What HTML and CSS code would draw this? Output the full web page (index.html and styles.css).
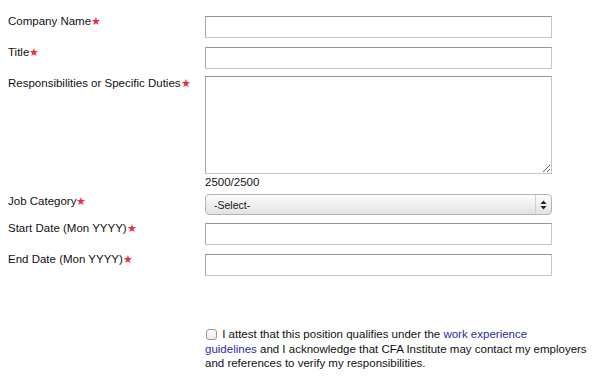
FILE: index.html
```html
<!DOCTYPE html>
<html>
<head>
  <title>Work Experience</title>
  <link rel="stylesheet" href="styles.css">
</head>
<body>
  <!-- Work experience form -->
  <form class="exp-form">
    <div class="row row-company">
      <label class="label">Company Name<span class="req">&#9733;</span></label>
      <input class="field" type="text">
    </div>
    <div class="row row-title">
      <label class="label">Title<span class="req">&#9733;</span></label>
      <input class="field" type="text">
    </div>
    <div class="row row-duties">
      <label class="label">Responsibilities or Specific Duties<span class="req">&#9733;</span></label>
      <div class="field-col">
        <textarea class="field area"></textarea>
        <div class="counter">2500/2500</div>
      </div>
    </div>
    <div class="row row-category">
      <label class="label">Job Category<span class="req">&#9733;</span></label>
      <div class="select-wrap">
        <select class="select">
          <option>-Select-</option>
        </select>
        <!-- up/down arrows drawn over the select -->
        <span class="select-arrows">
          <svg width="7" height="10" viewBox="0 0 7 10"><path d="M3.5 0.5 L6.5 4 H0.5 Z M3.5 9.5 L6.5 6 H0.5 Z" fill="#222"/></svg>
        </span>
      </div>
    </div>
    <div class="row row-start">
      <label class="label">Start Date (Mon YYYY)<span class="req">&#9733;</span></label>
      <input class="field" type="text">
    </div>
    <div class="row row-end">
      <label class="label">End Date (Mon YYYY)<span class="req">&#9733;</span></label>
      <input class="field" type="text">
    </div>
    <!-- Attestation -->
    <p class="attest">
      <input class="check" type="checkbox"> I attest that this position qualifies under the <a href="#">work experience<br>guidelines</a> and I acknowledge that CFA Institute may contact my employers<br>and references to verify my responsibilities.
    </p>
  </form>
</body>
</html>
```

FILE: styles.css
```css
body {
  margin: 0;
  font-family: 'Liberation Sans', Arial, sans-serif;
  font-size: 11.5px;
  color: #111;
  background: #fff;
}
.exp-form {
  padding: 0 8px;
}
.row {
  display: flex;
  align-items: flex-start;
}
.label {
  width: 197px;
  flex: none;
  line-height: 16px;
}
.req {
  color: #e8313f;
  font-size: 11px;
}
.field {
  box-sizing: border-box;
  width: 347px;
  height: 22px;
  margin: 3px 0 0;
  border: 1px solid #c6c6c6;
  border-top-color: #959595;
  border-left-color: #a8a8a8;
  padding: 2px 4px;
  font: inherit;
}
.row-company { margin-top: 13px; }
.row-title { margin-top: 6px; }
.row-duties { margin-top: 6px; }
.area {
  display: block;
  height: 98px;
  margin-top: 1px;
  resize: both;
}
.counter {
  line-height: 16px;
}
.row-category { margin-top: 3px; }
.select-wrap {
  position: relative;
  margin-top: 1px;
}
.select {
  appearance: none;
  -webkit-appearance: none;
  box-sizing: border-box;
  width: 347px;
  height: 21px;
  border: 1px solid #b4b4b4;
  border-radius: 4px;
  background: linear-gradient(#fdfdfd, #ececec 60%, #e2e2e2);
  box-shadow: inset 0 1px 0 #fff;
  padding: 0 8px;
  font: 10.5px 'Liberation Sans', Arial, sans-serif;
  color: #111;
}
.select-arrows {
  position: absolute;
  right: 1px;
  top: 1px;
  bottom: 1px;
  width: 15px;
  border-left: 1px solid #d0d0d0;
  display: flex;
  align-items: center;
  justify-content: center;
  pointer-events: none;
}
.row-start { margin-top: 5px; }
.row-end { margin-top: 6px; }
.attest {
  margin: 51px 0 0 197px;
  line-height: 14.5px;
  white-space: nowrap;
}
.check {
  appearance: none;
  -webkit-appearance: none;
  width: 11px;
  height: 11px;
  margin: 0 2px 0 1px;
  vertical-align: -2px;
  border: 1px solid #9a9a9a;
  border-radius: 3px;
  background: linear-gradient(#fff, #ececec);
}
.attest a {
  color: #2b2ba6;
  text-decoration: none;
}
```
